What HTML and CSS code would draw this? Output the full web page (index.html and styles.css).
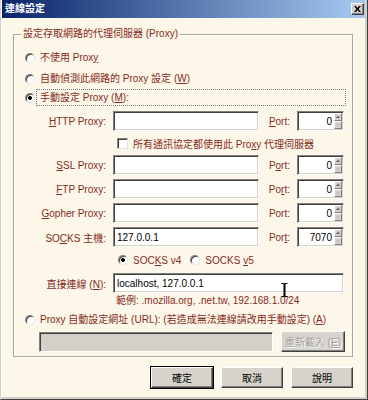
FILE: index.html
```html
<!DOCTYPE html>
<html lang="zh-Hant">
<head>
  <meta charset="UTF-8">
  <title>連線設定</title>
  <link rel="stylesheet" href="styles.css">
</head>
<body>

<div class="window">
  <div class="frame">
    <div class="titlebar">
      <span class="title">連線設定</span>
      <span class="close-btn">
        <svg width="7" height="6" viewBox="0 0 7 6"><path d="M0 0h2l1.5 2L5 0h2L4.5 3 7 6H5L3.5 4 2 6H0l2.5-3z" fill="#000"/></svg>
      </span>
    </div>

    <div class="content">
      <fieldset class="group">
        <legend>設定存取網路的代理伺服器 (Proxy)</legend>

        <div class="opt"><span class="radio"></span><span class="opt-text">不使用 Prox<u>y</u></span></div>
        <div class="opt"><span class="radio"></span><span class="opt-text">自動偵測此網路的 Proxy 設定 (<u>W</u>)</span></div>
        <div class="opt opt-manual"><span class="radio checked"></span><span class="opt-text focus">手動設定 Proxy (<u>M</u>):</span></div>

        <div class="manual">
          <span class="lbl"><u>H</u>TTP Proxy:</span>
          <div class="field"></div>
          <span class="lbl"><u>P</u>ort:</span>
          <div class="field port"><span class="num">0</span><span class="spin"><i class="up"></i><i class="down"></i></span></div>

          <div class="share"><span class="check"></span><span>所有通訊協定都使用此 Pro<u>x</u>y 代理伺服器</span></div>

          <span class="lbl"><u>S</u>SL Proxy:</span>
          <div class="field"></div>
          <span class="lbl">P<u>o</u>rt:</span>
          <div class="field port"><span class="num">0</span><span class="spin"><i class="up"></i><i class="down"></i></span></div>

          <span class="lbl"><u>F</u>TP Proxy:</span>
          <div class="field"></div>
          <span class="lbl">Po<u>r</u>t:</span>
          <div class="field port"><span class="num">0</span><span class="spin"><i class="up"></i><i class="down"></i></span></div>

          <span class="lbl"><u>G</u>opher Proxy:</span>
          <div class="field"></div>
          <span class="lbl">Port:</span>
          <div class="field port"><span class="num">0</span><span class="spin"><i class="up"></i><i class="down"></i></span></div>

          <span class="lbl">SO<u>C</u>KS 主機:</span>
          <div class="field"><span class="val">127.0.0.1</span></div>
          <span class="lbl">Por<u>t</u>:</span>
          <div class="field port"><span class="num">7070</span><span class="spin"><i class="up"></i><i class="down"></i></span></div>

          <div class="socks-ver">
            <span class="radio checked"></span><span class="ver">SOC<u>K</u>S v4</span>
            <span class="radio"></span><span class="ver">SOCKS <u>v</u>5</span>
          </div>

          <span class="lbl">直接連線 (<u>N</u>):</span>
          <div class="field wide">
            <span class="val">localhost, 127.0.0.1</span>
            <svg class="ibeam" width="7" height="14" viewBox="0 0 7 14"><path d="M0.5 0.5h2.5v13h-2.5M6.5 0.5h-2.5v13h2.5M3.5 0.5v13" fill="none" stroke="#000" stroke-width="1"/></svg>
          </div>
        </div>

        <div class="hint">範例: .mozilla.org, .net.tw, 192.168.1.0/24</div>

        <div class="opt"><span class="radio"></span><span class="opt-text">Proxy 自動設定網址 (URL): (若造成無法連線請改用手動設定) (<u>A</u>)</span></div>

        <div class="url-row">
          <div class="field disabled"></div>
          <button class="btn btn-disabled">重新載入 (<u>E</u>)</button>
        </div>
      </fieldset>

      <div class="actions">
        <button class="btn btn-default">確定</button>
        <button class="btn">取消</button>
        <button class="btn">說明</button>
      </div>
    </div>
  </div>
</div>

</body>
</html>
```

FILE: styles.css
```css
* { box-sizing: border-box; }

body {
  margin: 0;
  font-family: "Liberation Sans", "Noto Sans CJK TC", sans-serif;
  font-size: 10px;
  color: #852a20;
}

.window {
  width: 368px;
  height: 400px;
  background: #fdf7ea;
  border-left: 1px solid #d4d0c8;
  border-right: 1px solid #404040;
  border-bottom: 1px solid #404040;
}
.frame {
  height: 100%;
  border-left: 1px solid #fff;
  border-right: 2px solid #d4d0c8;
  border-bottom: 2px solid #d4d0c8;
}

/* title bar */
.titlebar {
  height: 18px;
  display: flex;
  align-items: center;
  justify-content: space-between;
  padding: 0 1px 0 3px;
  background: linear-gradient(to right, #0a246a, #a6caf0);
}
.title {
  color: #fff;
  font-weight: bold;
  font-size: 10px;
  line-height: 12px;
}
.close-btn {
  width: 13px;
  height: 12px;
  display: flex;
  align-items: center;
  justify-content: center;
  background: #d4d0c8;
  border: 1px solid;
  border-color: #fff #404040 #404040 #fff;
  box-shadow: inset -1px -1px #808080;
}

.content {
  padding: 10px 0 0 11px;
}

/* group box */
.group {
  width: 340px;
  min-width: 0;
  margin: 0;
  padding: 7px 1px 4px 11px;
  border: 1px solid #a7a59e;
  box-shadow: inset 1px 1px #fff, 1px 1px #fff;
}
.group legend {
  padding: 0 2px;
  margin-left: -4px;
  line-height: 12px;
  background: #fdf7ea;
}

.opt {
  height: 21px;
  display: flex;
  align-items: center;
}
.opt-text {
  margin-left: 5px;
  line-height: 12px;
}
.opt-manual {
  height: 17px;
}
.opt-manual .opt-text.focus {
  margin-left: 1px;
  width: 310px;
  height: 17px;
  padding-left: 3px;
  display: flex;
  align-items: center;
  border: 1px dotted #777;
}

.radio {
  flex: none;
  width: 10px;
  height: 10px;
  border-radius: 50%;
  background: #fff;
  border: 1px solid;
  border-color: #808080 #e4e2dc #e4e2dc #808080;
  box-shadow: inset 1px 1px #404040;
}
.radio.checked {
  background: radial-gradient(circle, #000 0 1.8px, #fff 2.2px);
}
.check {
  flex: none;
  width: 11px;
  height: 11px;
  background: #fff;
  border: 1px solid;
  border-color: #808080 #e4e2dc #e4e2dc #808080;
  box-shadow: inset 1px 1px #404040;
}

/* manual proxy grid */
.manual {
  margin-top: 5px;
  display: grid;
  grid-template-columns: 81px 146px 24px 47px;
  grid-template-rows: 20px 16px 20px 20px 20px 20px 18px 20px;
  column-gap: 7px;
  row-gap: 4px;
  align-items: center;
}
.lbl {
  justify-self: end;
  white-space: nowrap;
}

.field {
  height: 20px;
  display: flex;
  align-items: center;
  padding: 0 3px;
  background: #fff;
  color: #000;
  border: 1px solid;
  border-color: #808080 #fff #fff #808080;
  box-shadow: inset 1px 1px #404040, inset -1px -1px #d4d0c8;
  white-space: nowrap;
}
.field.port {
  justify-content: flex-end;
  padding: 1px 1px 1px 3px;
}
.field .num {
  margin-right: 2px;
}
.field.wide {
  grid-column: 2 / 5;
  position: relative;
}
.field.disabled {
  background: #d4d0c8;
}

.spin {
  width: 8px;
  height: 16px;
  display: flex;
  flex-direction: column;
}
.spin i {
  flex: 1;
  display: flex;
  align-items: center;
  justify-content: center;
  background: #d4d0c8;
  border: 1px solid;
  border-color: #fff #808080 #808080 #fff;
}
.spin i::after {
  content: '';
  border-left: 2px solid transparent;
  border-right: 2px solid transparent;
}
.spin .up::after { border-bottom: 2px solid #555; }
.spin .down::after { border-top: 2px solid #bbb; }

.ibeam {
  position: absolute;
  left: 167px;
  top: 9px;
}

.share {
  grid-column: 2 / 5;
  display: flex;
  align-items: center;
  gap: 5px;
  padding-left: 4px;
  white-space: nowrap;
}

.socks-ver {
  grid-column: 2 / 5;
  display: flex;
  align-items: center;
  padding-left: 5px;
}
.socks-ver .ver {
  margin-left: 5px;
  margin-right: 9px;
}

.hint {
  height: 16px;
  line-height: 16px;
  padding-left: 91px;
}

.url-row {
  margin-top: 1px;
  display: flex;
  align-items: center;
  gap: 8px;
  padding-left: 14px;
}
.url-row .field {
  width: 234px;
}

/* buttons */
.btn {
  height: 21px;
  padding: 0;
  font-family: "Liberation Sans", "Noto Sans CJK TC", sans-serif;
  font-size: 10px;
  color: #000;
  background: #d6d3cc;
  border: 1px solid;
  border-color: #fff #404040 #404040 #fff;
  box-shadow: inset -1px -1px #808080;
}
.url-row .btn {
  width: 64px;
}
.btn-disabled {
  color: #a09d96;
  text-shadow: 1px 1px #fff;
}
.btn-default {
  outline: 1px solid #000;
  outline-offset: 0;
}

.actions {
  width: 340px;
  margin-top: 10px;
  display: flex;
  justify-content: flex-end;
  gap: 8px;
}
.actions .btn {
  width: 62px;
}
```
